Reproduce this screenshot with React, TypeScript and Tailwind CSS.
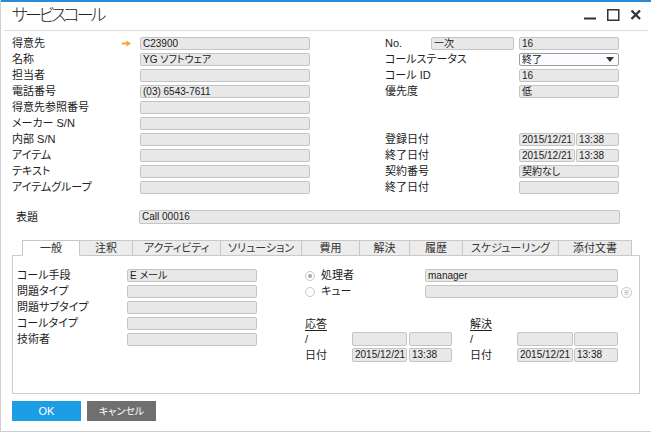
import clsx from "clsx";
import type { ReactNode } from "react";

// ----------------------------------------------------------------------------
// Small building blocks
// ----------------------------------------------------------------------------

function Field({
  value,
  className,
  tall,
}: {
  value?: string;
  className?: string;
  tall?: boolean;
}) {
  return (
    <div
      className={clsx(
        "shrink-0 overflow-hidden whitespace-nowrap rounded-[2px] border border-[#c4c4c4] bg-[#e8e8e8] px-[2px] text-[10px] text-[#1a1a1a]",
        tall ? "h-[14px] leading-[12px]" : "h-[13px] leading-[11px]",
        className
      )}
    >
      {value}
    </div>
  );
}

function Label({ children, className }: { children?: ReactNode; className?: string }) {
  return (
    <span className={clsx("shrink-0 whitespace-nowrap text-[11px] leading-[13px] text-[#222]", className)}>
      {children}
    </span>
  );
}

function Arrow() {
  return (
    <svg width="9" height="7" viewBox="0 0 9 7">
      <path d="M0 3.5H5.5" stroke="#f4a52a" strokeWidth="2" />
      <path d="M4.5 0.5L9 3.5L4.5 6.5Z" fill="#f4a52a" />
    </svg>
  );
}

// ----------------------------------------------------------------------------
// Data
// ----------------------------------------------------------------------------

const leftRows: { label: string; value?: string; arrow?: boolean }[] = [
  { label: "得意先", value: "C23900", arrow: true },
  { label: "名称", value: "YG ソフトウェア" },
  { label: "担当者" },
  { label: "電話番号", value: "(03) 6543-7611" },
  { label: "得意先参照番号" },
  { label: "メーカー S/N" },
  { label: "内部 S/N" },
  { label: "アイテム" },
  { label: "テキスト" },
  { label: "アイテムグループ" },
];

const tabs = [
  { label: "一般", w: "w-[58px]" },
  { label: "注釈", w: "w-[53px]" },
  { label: "アクティビティ", w: "w-[88px]" },
  { label: "ソリューション", w: "w-[81px]" },
  { label: "費用", w: "w-[58px]" },
  { label: "解決", w: "w-[50px]" },
  { label: "履歴", w: "w-[53px]" },
  { label: "スケジューリング", w: "w-[96px]" },
  { label: "添付文書", w: "w-[73px]" },
];

const generalRows = ["コール手段", "問題タイプ", "問題サブタイプ", "コールタイプ", "技術者"];

// ----------------------------------------------------------------------------
// Component
// ----------------------------------------------------------------------------

export default function App() {
  return (
    <div className="h-[434px] w-[651px] overflow-hidden bg-white font-['Liberation_Sans','Noto_Sans_CJK_JP',sans-serif] [font-feature-settings:'palt']">
      <div className="flex h-[432px] flex-col border-b border-l border-[#cfcfcf]">
        {/* Top accent */}
        <div className="h-[2px] bg-[#2b8bd6]" />

        {/* Title bar */}
        <div className="flex h-[28px] items-center justify-between pl-[11px] pr-[8px]">
          <span className="text-[17px] font-light leading-[28px] tracking-[-3px] text-[#222]">サービスコール</span>
          <svg width="60" height="28" viewBox="0 0 60 28">
            <rect x="1" y="15.5" width="12" height="2" fill="#333" />
            <rect x="24.75" y="7.75" width="11" height="10.5" fill="none" stroke="#333" strokeWidth="1.5" />
            <path d="M48.5 8.5L57 17M57 8.5L48.5 17" stroke="#333" strokeWidth="2.3" />
          </svg>
        </div>
        <div className="mx-[3px] border-t border-[#dcdcdc]" />

        {/* Header form */}
        <div className="flex pl-[11px] pt-[6px]">
          <div className="flex w-[373px] flex-col gap-[3px]">
            {leftRows.map((r) => (
              <div key={r.label} className="flex h-[13px] items-center">
                <Label className="w-[110px]">{r.label}</Label>
                <span className="flex w-[18px] items-center">{r.arrow && <Arrow />}</span>
                <Field value={r.value} className="w-[170px]" />
              </div>
            ))}
          </div>

          <div className="flex flex-col gap-[3px]">
            <div className="flex h-[13px] items-center">
              <Label className="w-[46px]">No.</Label>
              <Field value="一次" className="w-[83px]" />
              <Field value="16" className="ml-[5px] w-[100px]" />
            </div>
            <div className="flex h-[13px] items-center">
              <Label className="w-[134px]">コールステータス</Label>
              <div className="flex h-[13px] w-[100px] items-center justify-between rounded-[2px] border border-[#9c9c9c] bg-[#fafcff] px-[2px] text-[10px] leading-[11px] text-[#1a1a1a]">
                <span>終了</span>
                <svg width="8" height="5" viewBox="0 0 8 5" className="mr-[2px]">
                  <path d="M0 0H8L4 5Z" fill="#333" />
                </svg>
              </div>
            </div>
            <div className="flex h-[13px] items-center">
              <Label className="w-[134px]">コール ID</Label>
              <Field value="16" className="w-[100px]" />
            </div>
            <div className="flex h-[13px] items-center">
              <Label className="w-[134px]">優先度</Label>
              <Field value="低" className="w-[100px]" />
            </div>
            <div className="h-[13px]" />
            <div className="h-[13px]" />
            <div className="flex h-[13px] items-center">
              <Label className="w-[134px]">登録日付</Label>
              <Field value="2015/12/21" className="w-[56px]" />
              <Field value="13:38" className="ml-[1px] w-[43px]" />
            </div>
            <div className="flex h-[13px] items-center">
              <Label className="w-[134px]">終了日付</Label>
              <Field value="2015/12/21" className="w-[56px]" />
              <Field value="13:38" className="ml-[1px] w-[43px]" />
            </div>
            <div className="flex h-[13px] items-center">
              <Label className="w-[134px]">契約番号</Label>
              <Field value="契約なし" className="w-[100px]" />
            </div>
            <div className="flex h-[13px] items-center">
              <Label className="w-[134px]">終了日付</Label>
              <Field className="w-[100px]" />
            </div>
          </div>
        </div>

        {/* Subject */}
        <div className="mt-[16px] flex h-[14px] items-center pl-[15px]">
          <Label className="w-[123px]">表題</Label>
          <Field tall value="Call 00016" className="w-[481px]" />
        </div>

        {/* Tabs */}
        <div className="relative z-10 mt-[16px] flex pl-[21px]">
          {tabs.map((t, i) => (
            <div
              key={t.label}
              className={clsx(
                "flex h-[16px] items-center justify-center border-r border-t border-[#c8c8c8] text-[11px] leading-[14px] text-[#333]",
                t.w,
                i === 0 ? "border-b border-l border-b-white bg-white" : "border-b bg-[#ececec]"
              )}
            >
              {t.label}
            </div>
          ))}
        </div>

        {/* Tab panel */}
        <div className="-mt-px ml-[11px] flex h-[139px] w-[628px] border border-[#cdcdcd] pl-[4px] pt-[13px]">
          <div className="flex w-[288px] flex-col gap-[3px]">
            {generalRows.map((label, i) => (
              <div key={label} className="flex h-[13px] items-center">
                <Label className="w-[110px]">{label}</Label>
                <Field value={i === 0 ? "E メール" : undefined} className="w-[130px]" />
              </div>
            ))}
          </div>

          <div className="flex flex-col">
            <div className="flex h-[13px] items-center">
              <div className="flex w-[120px] items-center gap-[6px]">
                <span className="flex h-[10px] w-[10px] items-center justify-center rounded-full border border-[#c6c6c6]">
                  <span className="h-[4px] w-[4px] rounded-full bg-[#a9a9a9]" />
                </span>
                <Label className="text-[#9a9a9a]">処理者</Label>
              </div>
              <Field value="manager" className="w-[193px]" />
            </div>
            <div className="mt-[3px] flex h-[13px] items-center">
              <div className="flex w-[120px] items-center gap-[6px]">
                <span className="h-[10px] w-[10px] rounded-full border border-[#c6c6c6]" />
                <Label className="text-[#9a9a9a]">キュー</Label>
              </div>
              <Field className="w-[193px]" />
              <svg width="11" height="11" viewBox="0 0 11 11" className="ml-[3px] mt-[2px]">
                <circle cx="5.5" cy="5.5" r="5" fill="none" stroke="#c4c4c4" />
                <path d="M3.5 3.8H7.5M3.5 5.5H7.5M3.5 7.2H7.5" stroke="#b4b4b4" strokeWidth="0.9" />
              </svg>
            </div>

            <div className="mt-[20px] flex h-[12px] items-center">
              <Label className="w-[165px] underline underline-offset-2">応答</Label>
              <Label className="underline underline-offset-2">解決</Label>
            </div>
            <div className="mt-[2px] flex h-[14px] items-center">
              <Label className="w-[47px]">/</Label>
              <Field tall className="w-[55px]" />
              <Field tall className="ml-[2px] w-[43px]" />
              <Label className="ml-[18px] w-[47px]">/</Label>
              <Field tall className="w-[56px]" />
              <Field tall className="ml-[1px] w-[44px]" />
            </div>
            <div className="mt-[2px] flex h-[14px] items-center">
              <Label className="w-[47px]">日付</Label>
              <Field tall value="2015/12/21" className="w-[55px]" />
              <Field tall value="13:38" className="ml-[2px] w-[43px]" />
              <Label className="ml-[18px] w-[47px]">日付</Label>
              <Field tall value="2015/12/21" className="w-[56px]" />
              <Field tall value="13:38" className="ml-[1px] w-[44px]" />
            </div>
          </div>
        </div>

        {/* Buttons */}
        <div className="mt-[7px] flex gap-[6px] pl-[11px]">
          <button className="h-[20px] w-[69px] bg-[#1d9de6] text-[11px] text-white">OK</button>
          <button className="h-[20px] w-[69px] bg-[#6f6f6f] text-[10px] text-white">キャンセル</button>
        </div>
      </div>
    </div>
  );
}
